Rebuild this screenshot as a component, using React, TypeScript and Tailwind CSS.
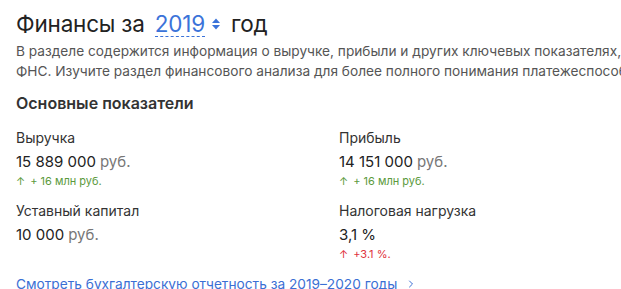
import { ChevronRight } from "lucide-react";

const metrics = [
  { label: "Выручка", value: "15 889 000", unit: "руб.", delta: "+ 16 млн руб.", color: "text-[#5b9a3c]" },
  { label: "Прибыль", value: "14 151 000", unit: "руб.", delta: "+ 16 млн руб.", color: "text-[#5b9a3c]" },
  { label: "Уставный капитал", value: "10 000", unit: "руб.", delta: "", color: "" },
  { label: "Налоговая нагрузка", value: "3,1 %", unit: "", delta: "+3.1 %.", color: "text-[#e0323c]" },
];

export default function App() {
  return (
    <div
      className="w-[621px] h-[289px] overflow-hidden bg-white text-[#333]"
      style={{ fontFamily: "Inter, 'Noto Sans', sans-serif" }}
    >
      <div className="w-[760px] pl-4 pt-[8px]">
        {/* Title */}
        <h1 className="flex items-center text-[22.5px] tracking-[-0.2px] leading-[32px] text-[#222] font-normal">
          <span>Финансы за</span>
          <span className="ml-[10px] text-[#3b73d9] border-b border-dashed border-[#3b73d9] leading-[25px]">2019</span>
          <svg className="ml-[6px]" width="10" height="14" viewBox="0 0 10 14">
            <path d="M1 6 L5 1.5 L9 6 Z" fill="#3b73d9" />
            <path d="M1 8 L5 12.5 L9 8 Z" fill="#3b73d9" />
          </svg>
          <span className="ml-[10px]">год</span>
        </h1>

        <p className="mt-[1px] text-[13.7px] leading-[20px] text-[#555] whitespace-nowrap">
          В разделе содержится информация о выручке, прибыли и других ключевых показателях,
          <br />
          ФНС. Изучите раздел финансового анализа для более полного понимания платежеспособности компании.
        </p>

        <h2 className="mt-[11px] text-[16px] leading-[22px] font-semibold text-[#333]">Основные показатели</h2>

        <div className="mt-[14px] grid grid-cols-[323px_1fr] gap-y-[11px]">
          {metrics.map((m) => (
            <div key={m.label} className="flex flex-col">
              <div className="text-[14px] leading-[20px] text-[#333]">{m.label}</div>
              <div className="mt-[4px] text-[15px] leading-[20px] text-[#222]">
                {m.value}
                {m.unit && <span className="ml-[4px] text-[#777]">{m.unit}</span>}
              </div>
              {m.delta ? (
                <div className={`text-[11px] leading-[18px] ${m.color}`}>
                  <span className="mr-[5px]">↑</span>
                  {m.delta}
                </div>
              ) : (
                <div className="h-[18px]" />
              )}
            </div>
          ))}
        </div>

        <a className="mt-[11px] flex items-center gap-[8px] text-[13.7px] leading-[20px] text-[#3b6fd4]" href="#">
          Смотреть бухгалтерскую отчетность за 2019–2020 годы
          <ChevronRight size={12} strokeWidth={2} />
        </a>
      </div>
    </div>
  );
}
